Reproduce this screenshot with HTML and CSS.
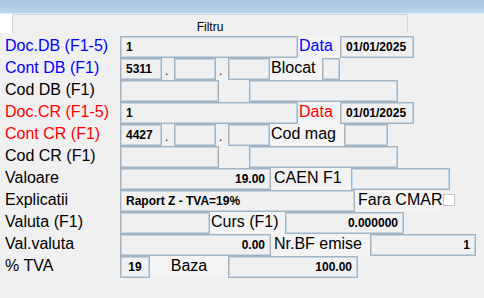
FILE: index.html
```html
<!DOCTYPE html>
<html lang="ro">
<head>
  <meta charset="UTF-8" />
  <title>Nota contabila</title>
  <link rel="stylesheet" href="styles.css">
</head>
<body>
  <div class="titlebar"></div>

  <div class="filter-row">
    <div class="corner"></div>
    <div class="filtru">Filtru</div>
  </div>

  <div class="form">
    <div class="row">
      <span class="lbl blue">Doc.DB (F1-5)</span>
      <span class="fld w178">1</span>
      <span class="tag blue w42">Data</span>
      <span class="fld w74">01/01/2025</span>
    </div>

    <div class="row">
      <span class="lbl blue">Cont DB (F1)</span>
      <span class="fld w42">5311</span>
      <span class="dot">.</span>
      <span class="fld w42"></span>
      <span class="dot">.</span>
      <span class="fld w42"></span>
      <span class="tag w52">Blocat</span>
      <span class="fld w18"></span>
    </div>

    <div class="row">
      <span class="lbl">Cod DB (F1)</span>
      <span class="fld w99"></span>
      <span class="gap30"></span>
      <span class="fld w149"></span>
    </div>

    <div class="row">
      <span class="lbl red">Doc.CR (F1-5)</span>
      <span class="fld w178">1</span>
      <span class="tag red w42">Data</span>
      <span class="fld w74">01/01/2025</span>
    </div>

    <div class="row">
      <span class="lbl red">Cont CR (F1)</span>
      <span class="fld w42">4427</span>
      <span class="dot">.</span>
      <span class="fld w42"></span>
      <span class="dot">.</span>
      <span class="fld w42"></span>
      <span class="tag w74">Cod mag</span>
      <span class="fld w44"></span>
    </div>

    <div class="row">
      <span class="lbl">Cod CR (F1)</span>
      <span class="fld w99"></span>
      <span class="gap30"></span>
      <span class="fld w149"></span>
    </div>

    <div class="row">
      <span class="lbl">Valoare</span>
      <span class="fld num w151">19.00</span>
      <span class="tag pad w80">CAEN F1</span>
      <span class="fld w99"></span>
    </div>

    <div class="row">
      <span class="lbl">Explicatii</span>
      <span class="fld w235">Raport Z - TVA=19%</span>
      <span class="tag pad w87">Fara CMAR</span>
      <span class="check"></span>
    </div>

    <div class="row">
      <span class="lbl">Valuta (F1)</span>
      <span class="fld w90"></span>
      <span class="tag w75">Curs (F1)</span>
      <span class="fld num w119">0.000000</span>
    </div>

    <div class="row">
      <span class="lbl">Val.valuta</span>
      <span class="fld num w151">0.00</span>
      <span class="tag pad w99">Nr.BF emise</span>
      <span class="fld num w106">1</span>
    </div>

    <div class="row">
      <span class="lbl">% TVA</span>
      <span class="fld w30 center">19</span>
      <span class="tag center w78">Baza</span>
      <span class="fld num w130">100.00</span>
    </div>
  </div>
</body>
</html>
```

FILE: styles.css
```css
body {
  margin: 0;
  background-color: #f0f0f0;
  font-family: "Liberation Sans", Arial, sans-serif;
  color: #000;
}

.titlebar {
  height: 13px;
  background: linear-gradient(#a9c6e5, #bcd5ee);
  border-bottom: 1px solid #e2ebf3;
}

.filter-row {
  display: flex;
  height: 22px;
}

.corner {
  width: 12px;
  height: 19px;
  background-color: #fff;
}

.filtru {
  width: 396px;
  height: 19px;
  box-sizing: border-box;
  border: 1px solid #d5d5d5;
  border-bottom: none;
  text-align: center;
  font-size: 12px;
  line-height: 24px;
}

.row {
  display: flex;
  align-items: center;
  height: 22px;
}

.lbl {
  width: 120px;
  box-sizing: border-box;
  padding-left: 5px;
  font-size: 16px;
  line-height: 20px;
  margin-top: -2px;
}

.blue { color: #0000ff; }
.red { color: #ff0000; }

.fld {
  height: 22px;
  box-sizing: border-box;
  border: 1px solid #a5b1bd;
  box-shadow: inset 0 0 0 1px #c2d6ea;
  padding: 0 5px;
  font-size: 12px;
  font-weight: bold;
  line-height: 21px;
  white-space: nowrap;
  overflow: hidden;
}

.fld.num { text-align: right; }
.fld.center { text-align: center; padding: 0; }

.tag {
  height: 22px;
  box-sizing: border-box;
  padding-left: 1px;
  font-size: 16px;
  line-height: 20px;
  background-color: #f3f3f3;
  white-space: nowrap;
}

.tag.pad { padding-left: 3px; }
.tag.center { text-align: center; padding: 0; }

.dot {
  width: 12px;
  box-sizing: border-box;
  padding-left: 3px;
  font-size: 12px;
  line-height: 26px;
  height: 22px;
}

.gap30 { width: 30px; }

.check {
  width: 12px;
  height: 12px;
  box-sizing: border-box;
  margin-left: 1px;
  margin-top: -2px;
  background-color: #fff;
  border: 1px solid #c8c8c8;
}

.w18 { width: 18px; }
.w30 { width: 30px; }
.w42 { width: 42px; }
.w44 { width: 44px; }
.w52 { width: 52px; }
.w74 { width: 74px; }
.w75 { width: 75px; }
.w78 { width: 78px; }
.w80 { width: 80px; }
.w87 { width: 87px; }
.w90 { width: 90px; }
.w99 { width: 99px; }
.w106 { width: 106px; }
.w119 { width: 119px; }
.w130 { width: 130px; }
.w149 { width: 149px; }
.w151 { width: 151px; }
.w178 { width: 178px; }
.w235 { width: 235px; }
```
